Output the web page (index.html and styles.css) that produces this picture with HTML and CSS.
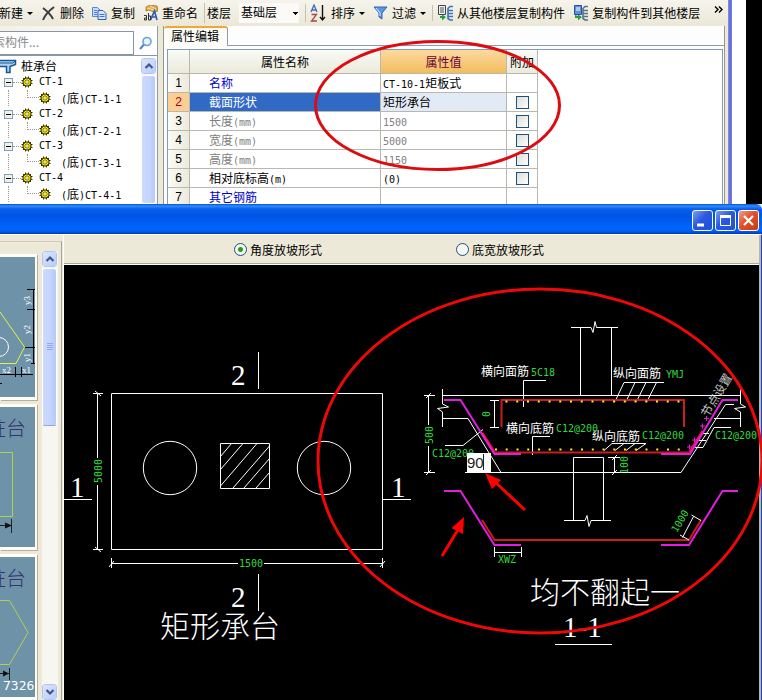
FILE: index.html
```html
<!DOCTYPE html>
<html lang="zh-CN">
<head>
<meta charset="utf-8">
<title>属性编辑</title>
<link rel="stylesheet" href="styles.css">
</head>
<body>
<svg class="defs" aria-hidden="true">
  <symbol id="gear" viewBox="0 0 12 12">
    <path d="M4 .5h1v1h2v-1h1v1.500h2v2h1.500v1h-1v2h1v1H10v2H8v1.500H7v-1H5v1H4V10H2V8H.5V7h1V5h-1V4H2V2h2z" fill="#3a3500"/>
    <circle cx="6" cy="6" r="3.500" fill="#f2ea20"/>
    <path d="M6 2v8M2 6h8M3.200 3.200l5.600 5.600M8.800 3.200l-5.600 5.600" stroke="#6b6200" stroke-width=".7"/>
    <circle cx="6" cy="6" r="1" fill="#fff"/>
  </symbol>
  <symbol id="up" viewBox="0 0 10 8"><path d="M1.500 6L5 2.500 8.500 6" fill="none" stroke="#3f5787" stroke-width="2.200"/></symbol>
  <symbol id="down" viewBox="0 0 10 8"><path d="M1.500 2L5 5.500 8.500 2" fill="none" stroke="#3f5787" stroke-width="2.200"/></symbol>
</svg>
<div class="desktop">
  <div class="top">
    <div class="app">
      <div class="toolbar">
        <div class="group edit">
          <button class="tool">新建<i class="caret"></i></button>
          <button class="tool"><svg width="15" height="15" viewBox="0 0 15 15"><path d="M2 2C6 5 10 9 12 13M13 1C9 4 4 9 2 14" fill="none" stroke="#3c3c40" stroke-width="2"/></svg>删除</button>
          <button class="tool"><svg width="15" height="15" viewBox="0 0 15 15"><path d="M.5 1.500h5l3 3v6h-8z" fill="#c4dafa" stroke="#5a86d2"/><path d="M2 4.500h3M2 6.500h3M2 8.500h3" stroke="#5a86d2"/><path d="M6 4.500h5l3 3v6H6z" fill="#d6e6fc" stroke="#2f5fb8"/><path d="M7.500 8.500h5M7.500 10.500h5" stroke="#3f74c8"/></svg>复制</button>
          <button class="tool"><svg width="15" height="16" viewBox="0 0 15 16"><path d="M3 2l4-2 7 1 1 5-4 1-5-2-3 1z" fill="#e3ad4c" stroke="#8e6520" stroke-width=".7"/><path d="M4 3l7 2M7 1l6 3" stroke="#fbe3a0"/><path d="M7.500 15l4-9 2.500 9M9 12h5" fill="none" stroke="#2d5bb5" stroke-width="1.700"/><path d="M1 10.500h2.500V15H1.500v-2h2M5.500 8v7h2v-4h-2" fill="none" stroke="#333"/></svg>重命名</button>
        </div>
        <div class="group floor">
          <label for="floor">楼层</label>
          <select id="floor" class="floor-select"><option>基础层</option></select>
        </div>
        <div class="group">
          <button class="tool"><svg width="17" height="18" viewBox="0 0 17 18"><path d="M1 8L4 1l3 7M2 6h4" fill="none" stroke="#4468b8" stroke-width="1.300"/><path d="M1.500 10.500H6.500L1.500 17H7" fill="none" stroke="#a04a48" stroke-width="1.300"/><path d="M12.500 1v14M10 13l2.500 3 2.500-3" fill="none" stroke="#111" stroke-width="1.400"/></svg>排序<i class="caret"></i></button>
          <button class="tool"><svg width="15" height="14" viewBox="0 0 15 14"><path d="M1 1h13L9 7v6l-3-2V7z" fill="#5f94e4" stroke="#2f62b8"/><path d="M3 2l4 5v3" fill="none" stroke="#c3dafa" stroke-width="1.200"/></svg>过滤<i class="caret"></i></button>
        </div>
        <div class="group">
          <button class="tool"><svg width="16" height="16" viewBox="0 0 16 16"><path d="M1.500.5h7v9h-7z" fill="#eee" stroke="#444"/><path d="M3 3h4M3 5h4M3 7h4" stroke="#555"/><path d="M3 11v2h2v2.500l4-3.500-4-2.500V11z" fill="#2c9a42"/><path d="M16 1.500h-3l-2 2v10l2 1.500h3M11 5.500h5M11 8.500h5M11 11.500h5" fill="none" stroke="#3f74b8" stroke-width="1.600"/></svg>从其他楼层复制构件</button>
          <button class="tool"><svg width="15" height="16" viewBox="0 0 15 16"><path d="M1.500.5h7v9h-7z" fill="#5f90dc" stroke="#2c509c"/><path d="M3 3h4M3 5h4" stroke="#fff"/><path d="M2 10v3h3v2.500l4-3.500-4-2.500V11z" fill="#2c9a42"/><path d="M15 1.500h-3l-2 2v10l2 1.500h3M10 5.500h5M10 8.500h5M10 11.500h5" fill="none" stroke="#5a6f88" stroke-width="1.600"/></svg>复制构件到其他楼层</button>
        </div>
        <button class="more" aria-label="更多"><svg width="9" height="7" viewBox="0 0 9 7"><path d="M1 .5l3 3-3 3M5 .5l3 3-3 3" fill="none" stroke="#000" stroke-width="1.400"/></svg></button>
      </div>
      <div class="panes">
        <div class="side">
          <form class="search">
            <input class="search-box" type="text" aria-label="搜索构件" placeholder="索构件...">
            <button class="search-go" type="button" aria-label="搜索"><svg width="14" height="14" viewBox="0 0 14 14"><circle cx="8" cy="5.500" r="4" fill="#e4f2fd" stroke="#6ba0d8" stroke-width="1.600"/><path d="M5 8.500L1 13" stroke="#4f86c6" stroke-width="2"/></svg></button>
          </form>
          <div class="tree-pane">
            <ul class="tree">
              <li class="root"><svg width="17" height="15" viewBox="0 0 17 15"><path d="M0 1.500h15.500v4L10 7.500v6H6.500V7.500H0" fill="#a7d4f4" stroke="#1c5590" stroke-width="1.500"/><path d="M0 4h13l2-2" fill="none" stroke="#1c5590"/></svg>桩承台</li>
              <li class="node"><button class="fold" aria-label="折叠"></button><i class="dots"></i><svg class="gear"><use href="#gear"/></svg><span class="latin">CT-1</span></li>
              <li class="leaf"><i class="elbow"></i><svg class="gear"><use href="#gear"/></svg><span><span class="latin">(</span>底<span class="latin">)CT-1-1</span></span></li>
              <li class="node"><button class="fold" aria-label="折叠"></button><i class="dots"></i><svg class="gear"><use href="#gear"/></svg><span class="latin">CT-2</span></li>
              <li class="leaf"><i class="elbow"></i><svg class="gear"><use href="#gear"/></svg><span><span class="latin">(</span>底<span class="latin">)CT-2-1</span></span></li>
              <li class="node"><button class="fold" aria-label="折叠"></button><i class="dots"></i><svg class="gear"><use href="#gear"/></svg><span class="latin">CT-3</span></li>
              <li class="leaf"><i class="elbow"></i><svg class="gear"><use href="#gear"/></svg><span><span class="latin">(</span>底<span class="latin">)CT-3-1</span></span></li>
              <li class="node"><button class="fold" aria-label="折叠"></button><i class="dots"></i><svg class="gear"><use href="#gear"/></svg><span class="latin">CT-4</span></li>
              <li class="leaf"><i class="elbow"></i><svg class="gear"><use href="#gear"/></svg><span><span class="latin">(</span>底<span class="latin">)CT-4-1</span></span></li>
            </ul>
            <div class="scroll">
              <button class="scroll-btn" aria-label="向上"><svg width="10" height="8"><use href="#up"/></svg></button>
              <div class="thumb"></div>
            </div>
          </div>
        </div>
        <div class="editor">
          <div class="tabs"><button class="tab">属性编辑</button></div>
          <div class="sheet">
            <table class="props">
              <colgroup><col class="c-num"><col class="c-name"><col class="c-value"><col class="c-add"></colgroup>
              <thead><tr><th></th><th>属性名称</th><th class="hot">属性值</th><th>附加</th></tr></thead>
              <tbody>
                <tr><th>1</th><td class="link">名称</td><td><span class="latin">CT-10-1</span>矩板式</td><td></td></tr>
                <tr class="current"><th>2</th><td>截面形状</td><td>矩形承台</td><td><input type="checkbox" aria-label="附加 截面形状"></td></tr>
                <tr class="dim"><th>3</th><td>长度<span class="latin">(mm)</span></td><td><span class="latin">1500</span></td><td><input type="checkbox" aria-label="附加 长度"></td></tr>
                <tr class="dim"><th>4</th><td>宽度<span class="latin">(mm)</span></td><td><span class="latin">5000</span></td><td><input type="checkbox" aria-label="附加 宽度"></td></tr>
                <tr class="dim"><th>5</th><td>高度<span class="latin">(mm)</span></td><td><span class="latin">1150</span></td><td><input type="checkbox" aria-label="附加 高度"></td></tr>
                <tr><th>6</th><td>相对底标高<span class="latin">(m)</span></td><td><span class="latin">(0)</span></td><td><input type="checkbox" aria-label="附加 相对底标高"></td></tr>
                <tr><th>7</th><td class="link">其它钢筋</td><td></td><td></td></tr>
              </tbody>
            </table>
          </div>
        </div>
      </div>
    </div>
    <div class="app-edge"></div>
    <div class="gutter"></div>
  </div>

  <div class="dialog">
    <div class="titlebar">
      <button class="win" aria-label="最小化"><svg width="19" height="19" viewBox="0 0 19 19"><path d="M4 14h7" stroke="#fff" stroke-width="3"/></svg></button>
      <button class="win" aria-label="最大化"><svg width="19" height="19" viewBox="0 0 19 19"><path d="M4.500 5v9.500h10V5" fill="none" stroke="#fff"/><path d="M4 5.500h11" stroke="#fff" stroke-width="3"/></svg></button>
      <button class="win close" aria-label="关闭"><svg width="19" height="19" viewBox="0 0 19 19"><path d="M5 5l9 9M14 5l-9 9" stroke="#fff" stroke-width="2.200"/></svg></button>
    </div>
    <div class="work">
      <div class="gallery">
        <div class="cards">
          <button class="card" aria-label="桩台样式一"><svg viewBox="0 256 35 140">
            <path d="M0 311L24.500 346 16 362.500H0" fill="none" stroke="#e6f23c"/>
            <circle cx="-1" cy="346" r="9.500" fill="none" stroke="#fff"/>
            <path d="M33.500 288v75M27 288.500h8M27 308.500h8M25 346.500h10M31 362.500h4M0 373.500h33M15.500 366v10M21.500 366v10M0 382.500h2" fill="none" stroke="#000"/>
            <g class="tiny"><text transform="translate(30 304) rotate(-90)">y3</text><text transform="translate(30 333) rotate(-90)">y2</text><text transform="translate(30 361) rotate(-90)">y1</text><text x="2" y="372">x2</text><text x="22" y="372">x1</text></g>
          </svg></button>
          <button class="card" aria-label="桩台样式二"><svg viewBox="0 406 35 140">
            <text class="cap" x="-14" y="435">桩台</text>
            <path d="M0 451.500h12.500v64H0" fill="none" stroke="#b4cf52"/>
            <path d="M0 524.500h11M11.500 518v14" stroke="#222"/><path d="M5 521.500l7 3-7 3z" fill="#111"/>
          </svg></button>
          <button class="card" aria-label="桩台样式三"><svg viewBox="0 556 35 140">
            <text class="cap" x="-14" y="585">桩台</text>
            <path d="M0 599.500h9.500L28 631.500 9.500 663.500H0" fill="none" stroke="#b4cf52"/>
            <path d="M0 672.500h9M9.500 667v12" stroke="#222"/><path d="M3 669.500l6 3-6 3z" fill="#111"/>
            <text class="count" x="3" y="689">7326</text>
          </svg></button>
        </div>
        <div class="scroll">
          <button class="scroll-btn" aria-label="向上"><svg width="10" height="8"><use href="#up"/></svg></button>
          <div class="thumb short"><svg width="6" height="8" viewBox="0 0 6 8"><path d="M0 .5h6M0 2.500h6M0 4.500h6M0 6.500h6" stroke="#8caaf0"/></svg></div>
          <div class="track"></div>
          <button class="scroll-btn" aria-label="向下"><svg width="10" height="8"><use href="#down"/></svg></button>
        </div>
      </div>
      <div class="stage">
        <div class="modes">
          <label><input type="radio" name="slope" checked>角度放坡形式</label>
          <label><input type="radio" name="slope">底宽放坡形式</label>
        </div>
        <svg class="cad" viewBox="64 265 695 435">
          <!-- plan view -->
          <g class="w">
            <path d="M111.500 393.500h271v156h-271zM97.500 393.500V458M97.500 485v64.500M93 393.500h10M93 549.500h10M95 391l6 5M95 547l6 5M111.500 563.500H238M264 563.500h118.500M111.500 558v10M382.500 558v10M109 567l5-6M380 567l5-6"/>
            <circle cx="170" cy="468" r="26.700"/><circle cx="324" cy="468" r="26.700"/>
            <path d="M220.500 443.500h49v45h-49zM220.500 456.500L231.500 443.500M220.500 469.500L243 443.500M220.500 486L257 443.500M233 488L269.500 446M244 488L269.500 458.500M256 488L269.500 472.500"/>
            <path d="M258.500 352v37M258.500 574v37M64 499.500h28M382.500 499.500H411"/>
          </g>
          <g class="digit"><text x="231" y="385">2</text><text x="231" y="607">2</text><text x="70" y="497">1</text><text x="391" y="497">1</text></g>
          <text class="title" x="160" y="637">矩形承台</text>
          <g class="g"><text class="mid" transform="translate(102 471) rotate(-90)">5000</text><text class="mid" x="251" y="567">1500</text></g>

          <!-- section 1-1 -->
          <g class="w">
            <path d="M580.500 395.500v-68M611.500 395.500v-68M571 327.500h20l2 5 2-11 1.500 6H618M442.500 395.500h298"/>
            <path d="M428.500 395.500V425M428.500 446v26.500M424 395.500h11M424 472.500h11M426 398l5-5M426 475l5-5"/>
            <path d="M442.500 389v15l6 3-11 1.500 5 3.500v15M740.500 389v15l5 3-11 1.500 6 3.500v15"/>
            <path d="M442.500 418.500H468L501 472.500M465 472.500H681L725.500 404.500H734M714 418.500h26.500"/>
            <path d="M494.500 400v28M490 400.500h9M490 427.500h9"/>
            <path d="M523.500 407V380.500H546M532.500 455V436.500H550M445 445.500h18l20-16"/>
            <path d="M624 382.500h40M624 382.500l-9 19M635 382.500l-9 19M646 382.500l-9.500 19M656.500 382.500l-9.500 19"/>
            <path d="M612 443.500h34M612 443.500l-8 7M624 443.500l-9 7M635 443.500l-9 7M646 443.500l-10 7"/>
            <path d="M731 427.500H714L703 447.500H695M700 433.500h9M698 440.500h8"/>
            <path d="M573.500 520.500v-63h30v63M564 520.500h21l2-5 2 11 2-6h20M614.500 457.500v15M608 457.500h12M612 460l5-5M612 475l5-5"/>
          </g>
          <g class="r"><path d="M501.500 427V400H684V427M494 452.500H690"/><path class="hot" d="M482 433l12 19M690 452l13-21"/></g>
          <g class="m"><path d="M444 400H460.500L494.500 454H521M661 454H690L722.500 400H738"/><path class="thin" d="M704 418.500h5M706.500 416v5M700 426h5M702.500 423.500v5M692 440h5M694.500 437.500v5M687 447h5M689.500 444.500v5"/></g>
          <path class="y" d="M505.500 401.500H681M495 449.500H688"/>
          <g class="lbl"><text x="481" y="376">横向面筋</text><text x="506" y="433">横向底筋</text><text x="613" y="378">纵向面筋</text><text x="592" y="441">纵向底筋</text><text class="soft" transform="translate(708 418) rotate(-59)">节点设置</text></g>
          <g class="g"><text x="531" y="376">5C18</text><text x="666" y="378">YMJ</text><text x="556" y="432">C12@200</text><text x="642" y="439">C12@200</text><text x="715" y="439">C12@200</text><text x="432" y="457">C12@200</text>
            <text class="mid" transform="translate(433 435) rotate(-90)">500</text><text class="mid" transform="translate(490 414) rotate(-90)">0</text><text class="mid" transform="translate(628 465) rotate(-90)">100</text><text class="mid" x="507" y="563">XWZ</text><text class="mid" transform="translate(683 523) rotate(-59)">1000</text></g>

          <!-- bar bending profile -->
          <g class="r"><path d="M482 520L494.500 540H689L701 520"/></g>
          <g class="m"><path d="M444 491H460.500L494.500 545H521M661 545H689L722.500 491H738"/></g>
          <path class="w" d="M494.500 547v10M521.500 547v10M494.500 552.500h27M693.500 516.500l-11 21M691.500 515l9.500 5.500M680 535l9 5"/>
          <text class="title" x="530" y="603">均不翻起一</text>
          <text class="digit" x="563" y="637">1-1</text>
          <path class="w" d="M555 644.500h57"/>
          <foreignObject x="467" y="453" width="24" height="19"><input class="angle" type="text" value="90" aria-label="放坡角度"></foreignObject>
          <path class="w caret-line" d="M483.500 454v16"/>
        </svg>
      </div>
    </div>
  </div>

  <svg class="notes" viewBox="0 0 762 700" preserveAspectRatio="xMinYMin meet" aria-hidden="true">
    <ellipse cx="437.500" cy="105.500" rx="122" ry="64" stroke="#dc0c10"/>
    <ellipse cx="540" cy="461" rx="222" ry="172" stroke="#ee0808"/>
    <path d="M525 510L494 481M442 556L459 528" stroke="#f00"/>
    <path d="M485 473l16 7-9 9zM464 517l-12.500 11 11.500 6z" fill="#f00" stroke="none"/>
  </svg>
</div>
</body>
</html>
```
FILE: styles.css
```css
* { box-sizing: border-box; }
body {
  margin: 0;
  font: 12px/16px "Noto Sans CJK SC", sans-serif;
  color: #000;
  background: #000;
}
button { font: inherit; color: inherit; padding: 0; border: 0; background: none; }
ul { margin: 0; padding: 0; list-style: none; }
svg { flex: none; }
.defs { position: absolute; width: 0; height: 0; }
.latin { font: 10px/12px "DejaVu Sans Mono", monospace; }

.desktop {
  position: relative;
  display: flex;
  flex-direction: column;
  height: 100vh;
  overflow: hidden;
}
.top { flex: 0 0 204px; display: flex; overflow: hidden; }
.app { flex: 1; min-width: 0; background: #ece9d8; }
.app-edge { width: 4px; background: linear-gradient(90deg, #8a92e0, #5f6bd8 50%, #7680dc); }
.gutter { width: 30px; background: linear-gradient(90deg, #fff 14px, #000 14px); }

/* toolbar */
.toolbar {
  display: flex;
  align-items: center;
  gap: 6px;
  height: 26px;
  padding-right: 5px;
  white-space: nowrap;
  overflow: hidden;
  background: linear-gradient(#f6f4ec, #ebe8d8);
}
.tool { display: flex; align-items: center; gap: 4px; flex: none; }
.caret { border: 3px solid transparent; border-top-color: #000; border-bottom: 0; width: 6px; }
.group {
  display: flex;
  align-items: center;
  gap: 8px;
  flex: none;
  padding-left: 4px;
  border-left: 1px solid #c5c2b2;
}
.edit { margin-left: -1px; padding-left: 0; border-left: 0; }
.floor { padding-left: 2px; }
.floor-select {
  appearance: none;
  width: 60px;
  height: 20px;
  padding: 0 0 2px 2px;
  border: 0;
  border-radius: 0;
  font: inherit;
  color: #000;
  background: linear-gradient(#000, #000) 54px 9px / 5px 1px no-repeat,
    linear-gradient(#000, #000) 55px 10px / 3px 1px no-repeat,
    linear-gradient(#000, #000) 56px 11px / 1px 1px no-repeat, #fbfaf6;
}
.more { margin-left: auto; margin-bottom: 8px; display: flex; }

/* component tree */
.panes { display: flex; height: 178px; }
.side { display: flex; flex-direction: column; width: 158px; border-right: 1px solid #8d9cae; }
.search { display: flex; align-items: center; gap: 5px; height: 30px; padding-top: 4px; border-bottom: 1px solid #8797a8; background: linear-gradient(90deg, #f3f0e6, #fff); }
.search-box {
  width: 134px;
  height: 24px;
  padding: 0 0 2px;
  border: 1px solid #8797a8;
  border-left: 0;
  font: inherit;
  text-indent: -7px;
  background: #fff;
}
.search-box::placeholder { color: #8a8a8a; }
.search-go { display: flex; }
.tree-pane { display: flex; flex: 1; min-height: 0; padding-top: 2px; background: #fff; overflow: hidden; }
.tree { flex: 1; }
.tree li { display: flex; align-items: center; height: 16px; white-space: nowrap; }
.root { gap: 4px; }
.gear { width: 12px; height: 12px; margin-right: 6px; }
.leaf .gear { margin-right: 10px; }
.node { padding-left: 4px; }
.fold {
  width: 9px;
  height: 9px;
  border: 1px solid #7b9ebd;
  background: linear-gradient(#000, #000) center / 5px 1px no-repeat, #f2f1ea;
}
.dots { width: 8px; border-top: 1px dotted #999; }
.leaf { margin-left: 8px; border-left: 1px dotted #999; padding-left: 18px; }
.elbow { width: 12px; height: 8px; margin-bottom: 8px; border-left: 1px dotted #999; border-bottom: 1px dotted #999; }

/* scroll bars */
.scroll { display: flex; flex-direction: column; gap: 1px; width: 16px; background: #f7f6f1; }
.scroll-btn {
  display: flex;
  align-items: center;
  justify-content: center;
  flex: none;
  width: 15px;
  height: 16px;
  border: 1px solid #fff;
  border-radius: 3px;
  outline: 1px solid #b4c6ee;
  outline-offset: -1px;
  background: linear-gradient(135deg, #dce6fe, #b8cbf8);
}
.thumb {
  flex: 1;
  width: 15px;
  border: 1px solid #fff;
  border-radius: 3px;
  background: linear-gradient(90deg, #cdd9fd, #c4d4fd 60%, #b6c8f7);
}
.short { flex: 0 0 158px; display: flex; align-items: center; justify-content: center; border-bottom-color: #8fa8dc; }
.track { flex: 1; }

/* property editor */
.editor { display: flex; flex-direction: column; flex: 1; min-width: 0; margin: 0 3px 0 5px; border: solid #96968c; border-width: 0 1px; background: #fdfdfe; }
.tabs { display: flex; height: 20px; border-bottom: 1px solid #8c9cac; }
.tab {
  height: 20px;
  padding: 0 8px 2px 7px;
  border-right: 1px solid #8c9cac;
  border-top: 2px solid #f0a830;
  border-radius: 3px 3px 0 0;
  background: #fdfcf8;
}
.sheet { flex: 1; min-height: 0; margin: 3px 1px 0 3px; border: solid #7f9db9; border-width: 1px 1px 0; background: #fff; overflow: hidden; }
.props { table-layout: fixed; width: 370px; border-spacing: 0; }
.c-num { width: 22px; }
.c-name { width: 191px; }
.c-value { width: 126px; }
.c-add { width: 31px; }
.props th, .props td {
  height: 19px;
  padding: 0 2px;
  border: solid #b9b8b0;
  border-width: 0 1px 1px 0;
  font-weight: 400;
  line-height: 16px;
  text-align: left;
  white-space: nowrap;
}
.props thead th { height: 24px; text-align: center; background: linear-gradient(#fafaf7, #ebeadb); }
.props thead .hot { color: #6a0038; background: linear-gradient(#fbd9a0, #f3bd5c); }
.props tbody th { text-align: center; font: 12px/16px "Liberation Sans", sans-serif; background: linear-gradient(90deg, #fbfbf8, #eceadb); }
.props td:nth-child(2) { padding-left: 19px; }
.props td:last-child { text-align: center; }
.props .link { color: #0000c8; }
.props .dim td { color: #808080; }
.props .current th { color: #a00020; background: #fbcf94; }
.props .current td:nth-child(2) { color: #fff; background: #316ac5; }
.props .current td:nth-child(3) { background: #e2eaf6; }
.props input {
  appearance: none;
  display: block;
  width: 13px;
  height: 13px;
  margin: 0 auto;
  border: 1px solid #1c5180;
  background: linear-gradient(135deg, #dcdcd7, #fff);
}

/* slope dialog */
.dialog { display: flex; flex-direction: column; flex: 1; min-height: 0; background: #ece9d8; }
.titlebar {
  display: flex;
  align-items: center;
  justify-content: flex-end;
  gap: 2px;
  height: 30px;
  flex: none;
  padding: 3px 3px 0 0;
  border-radius: 0 6px 0 0;
  background: linear-gradient(#0a50c8, #2e8cff 2px, #0560ec 5px, #0054e3 12px, #0066ff 24px, #0060f4 27px, #0038b8);
}
.win {
  display: flex;
  width: 21px;
  height: 21px;
  border: 1px solid #fff;
  border-radius: 3px;
  background: linear-gradient(135deg, #7d9ff0, #2a58e0 45%, #2050d8);
}
.close { background: linear-gradient(135deg, #f0a088, #e0502c 45%, #c83c14); }
.work { display: flex; flex: 1; min-height: 0; border-top: 1px solid #fff; border-right: 1px solid #1848c8; }
.gallery { display: flex; gap: 5px; width: 62px; margin-top: 6px; padding: 9px 3px 0 0; border-top: 1px solid #d0cdbc; border-right: 1px solid #a8a598; overflow: hidden; }
.cards { display: flex; flex-direction: column; gap: 4px; width: 38px; padding-top: 3px; }
.card { display: block; flex: none; width: 37px; height: 146px; border: solid #fffdf4; border-width: 3px 2px 3px 0; box-shadow: 1px 1px #b5b09e; background: #6e92a8; }
.card svg { display: block; width: 35px; height: 140px; }
.tiny { font: 9px "Liberation Serif", serif; fill: #fff; }
.cap { font: 20px "Noto Sans CJK SC", sans-serif; font-weight: 300; fill: #34346e; }
.count { font: 13px "DejaVu Sans Mono", monospace; fill: #fff; }

.stage { flex: 1; min-width: 0; margin-left: 1px; border-left: 1px solid #fff; border-right: 2px solid #b8b6a8; }
.modes {
  display: flex;
  align-items: center;
  gap: 134px;
  height: 30px;
  padding: 0 0 0 170px;
  border-bottom: 1px solid #fff;
  box-shadow: inset 0 -1px #aca899;
}
.modes label { display: flex; align-items: center; gap: 3px; }
.modes input {
  appearance: none;
  width: 13px;
  height: 13px;
  margin: 0;
  border: 1px solid #1c5180;
  border-radius: 50%;
  background: #f6f6f2;
}
.modes input:checked { background: radial-gradient(circle, #21a121 2px, #f6f6f2 3px); }

/* drawing */
.cad { display: block; width: 100%; background: #000; }
.w { fill: none; stroke: #fff; }
.r { fill: none; stroke: #cc1c1c; stroke-width: 2; }
.r .hot { stroke: #ff0a3c; stroke-width: 3; }
.m { fill: none; stroke: #e01ee0; stroke-width: 2; }
.m .thin { stroke-width: 1; }
.y { fill: none; stroke: #ffe838; stroke-width: 2; stroke-dasharray: 2 8.75; }
.digit { font: 29px "Liberation Serif", serif; fill: #fff; }
.title { font: 30px "Noto Sans CJK SC", sans-serif; font-weight: 300; fill: #fff; }
.lbl { font: 12px "Noto Sans CJK SC", sans-serif; fill: #fff; }
.soft { fill: #c4c4c4; }
.g { font: 10px "DejaVu Sans Mono", monospace; fill: #2fd93c; }
.mid { text-anchor: middle; }
.angle {
  display: block;
  width: 24px;
  height: 19px;
  padding: 0;
  border: 0;
  font: 15px/19px "Liberation Sans", sans-serif;
  color: #222;
  background: #fff;
}
.caret-line { stroke: #222; }

.notes {
  position: absolute;
  top: 0;
  left: 0;
  width: 100%;
  height: 100%;
  pointer-events: none;
  fill: none;
  stroke-width: 3;
}
```
